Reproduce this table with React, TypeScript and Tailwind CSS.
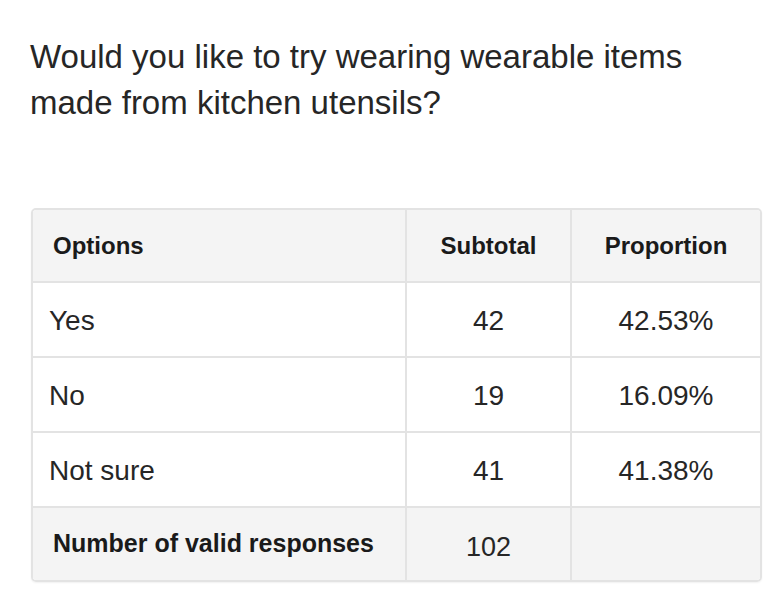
const rows = [
  { option: 'Yes', subtotal: '42', proportion: '42.53%' },
  { option: 'No', subtotal: '19', proportion: '16.09%' },
  { option: 'Not sure', subtotal: '41', proportion: '41.38%' },
]

export default function App() {
  return (
    <div className="w-[774px] h-[596px] bg-white text-[#222] font-['Liberation_Sans',Arial,sans-serif] overflow-hidden">
      <h1 className="pl-[30px] pt-[34px] w-[720px] text-[33px] leading-[46px] font-normal text-[#262626]">
        Would you like to try wearing wearable items made from kitchen utensils?
      </h1>

      <div className="ml-[31px] mt-[82px] w-[731px] rounded-[5px] border-2 border-[#e3e3e3] overflow-hidden shadow-[0_1px_2px_rgba(0,0,0,0.06)]">
        <div className="grid grid-cols-[374px_165px_188px] h-[73px] bg-[#f4f4f4] border-b-2 border-[#e3e3e3] text-[24px] font-bold text-[#1a1a1a]">
          <div className="flex items-center pl-[20px] border-r-2 border-[#e3e3e3]">Options</div>
          <div className="flex items-center justify-center border-r-2 border-[#e3e3e3]">Subtotal</div>
          <div className="flex items-center justify-center">Proportion</div>
        </div>

        {rows.map((r) => (
          <div
            key={r.option}
            className="grid grid-cols-[374px_165px_188px] h-[75px] border-b-2 border-[#e3e3e3] text-[28px] text-[#262626]"
          >
            <div className="flex items-center pl-[16px] pt-[2px] border-r-2 border-[#e3e3e3]">{r.option}</div>
            <div className="flex items-center justify-center pt-[2px] border-r-2 border-[#e3e3e3]">{r.subtotal}</div>
            <div className="flex items-center justify-center pt-[2px]">{r.proportion}</div>
          </div>
        ))}

        <div className="grid grid-cols-[374px_165px_188px] h-[72px] bg-[#f4f4f4] text-[#1a1a1a]">
          <div className="flex items-center pl-[20px] border-r-2 border-[#e3e3e3] text-[25px] font-bold">
            Number of valid responses
          </div>
          <div className="flex items-center justify-center pt-[6px] border-r-2 border-[#e3e3e3] text-[27px] text-[#262626]">102</div>
          <div />
        </div>
      </div>
    </div>
  )
}
